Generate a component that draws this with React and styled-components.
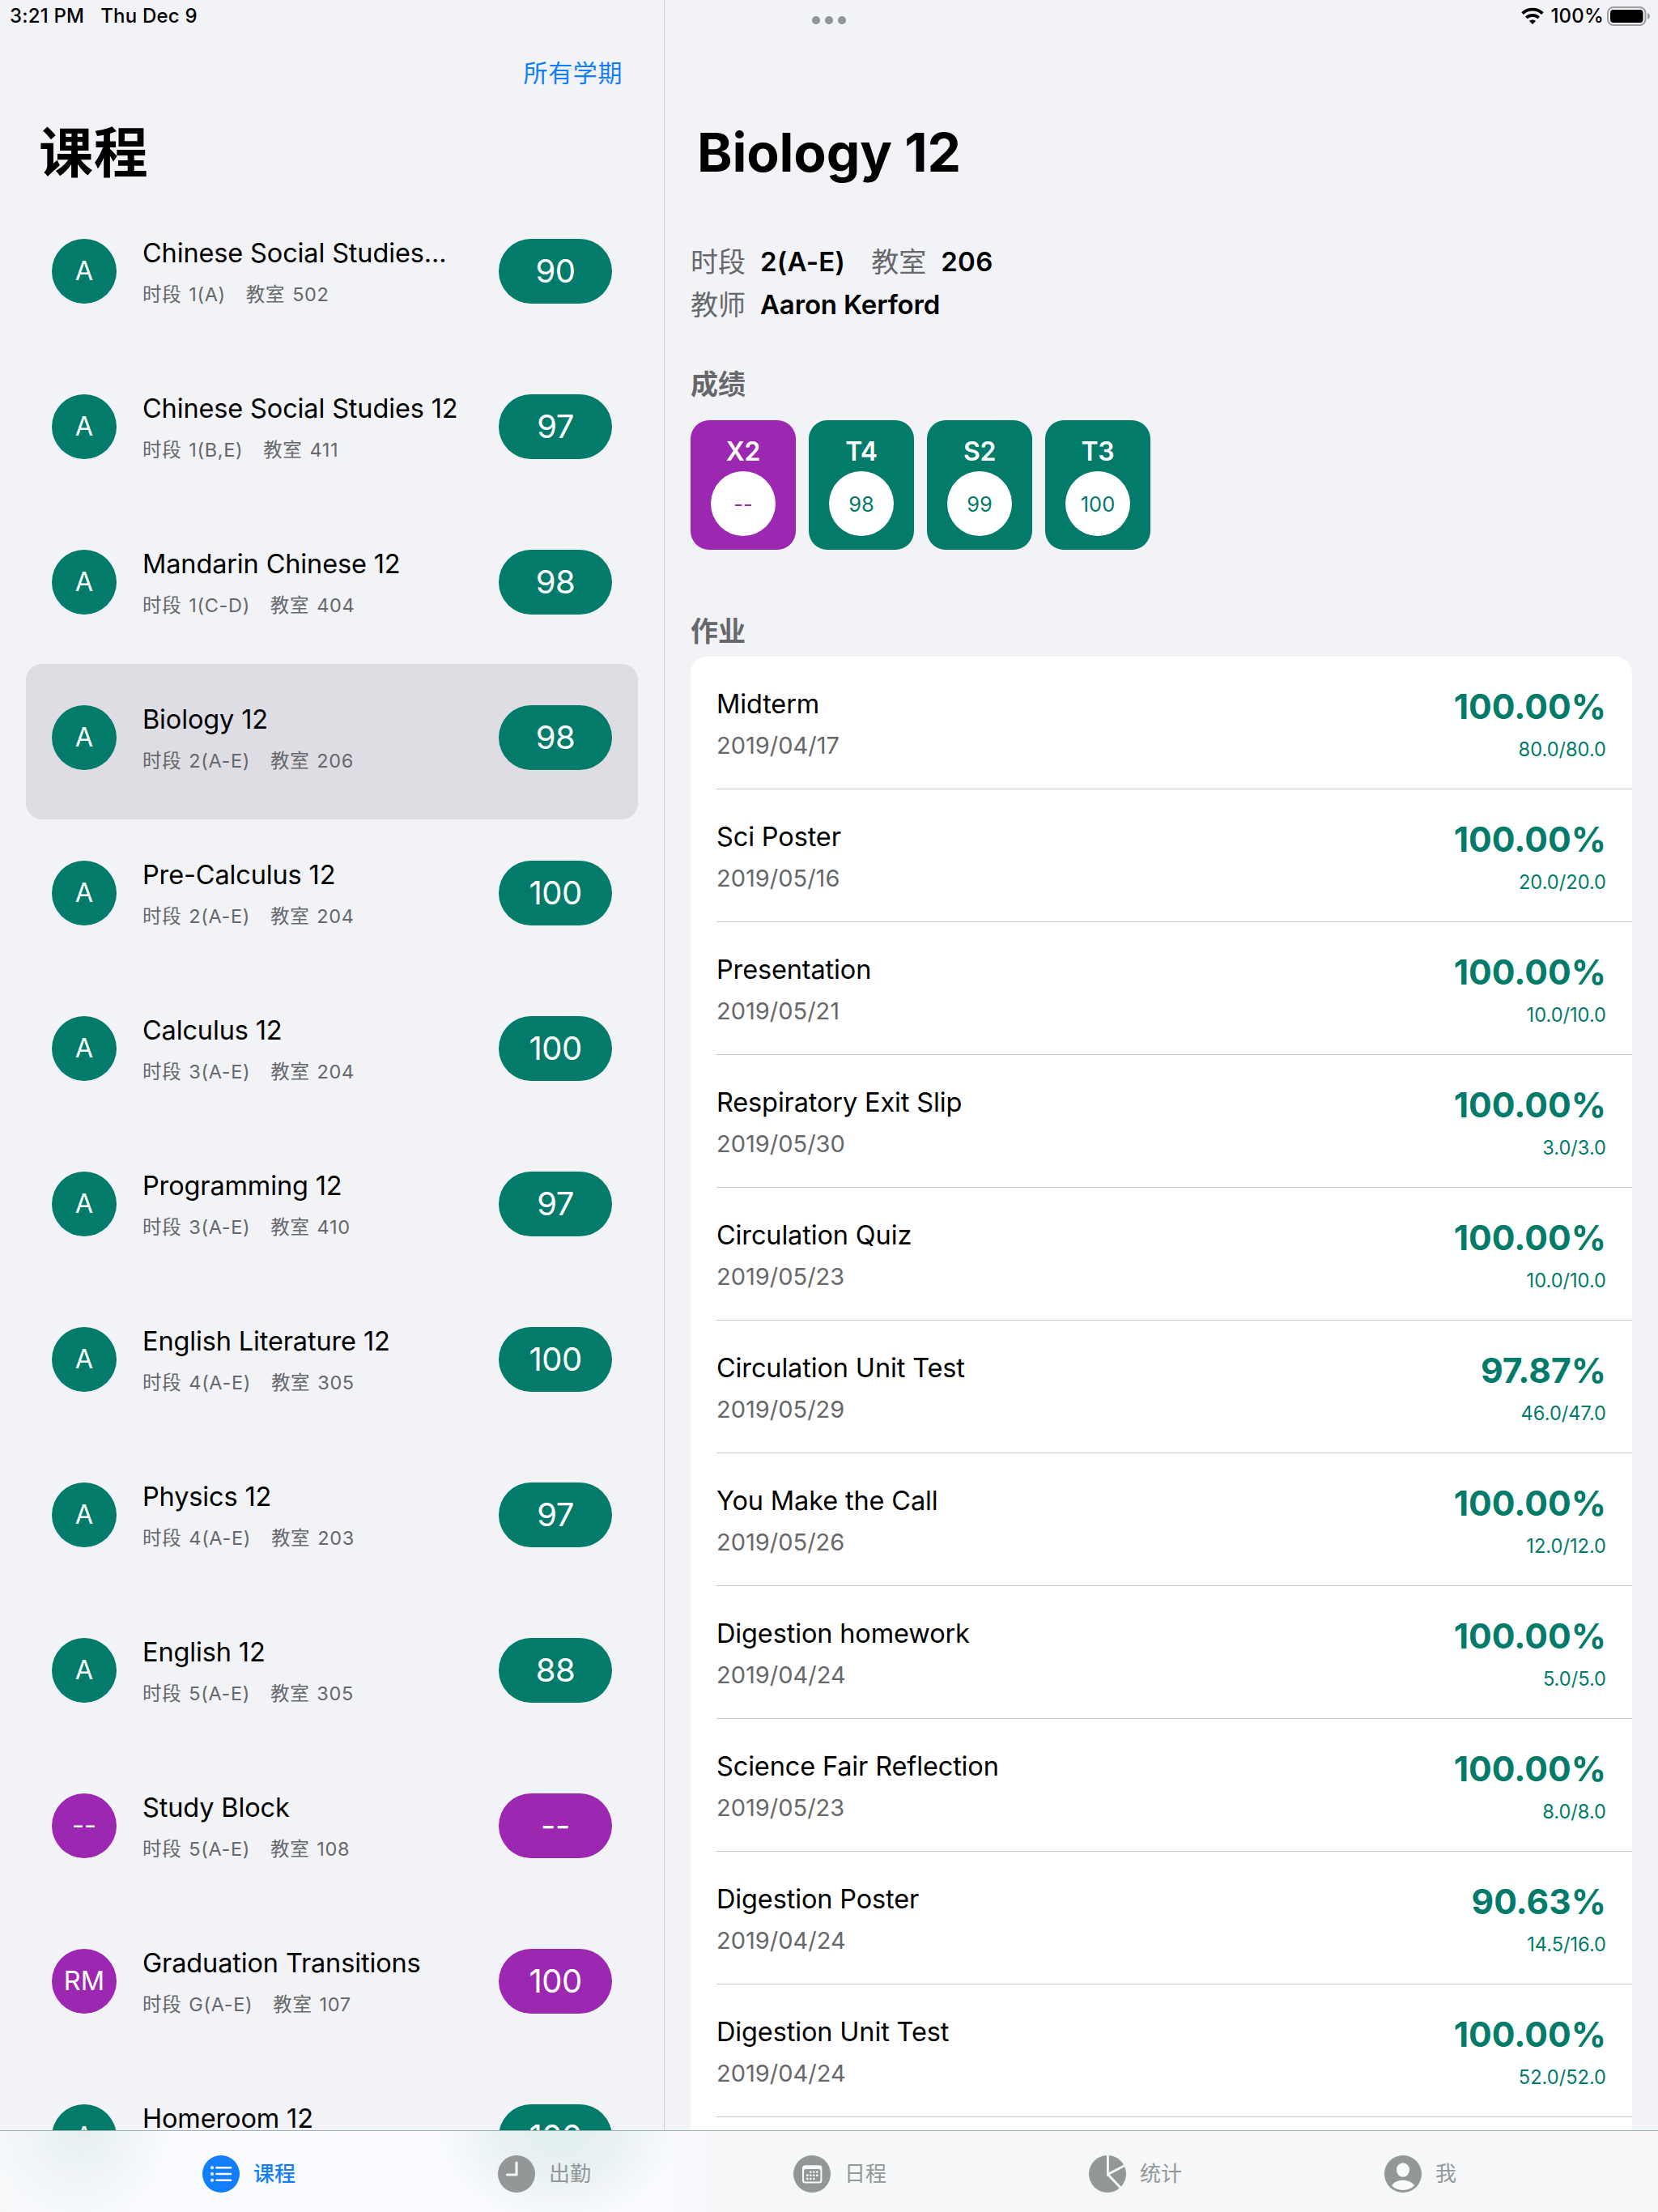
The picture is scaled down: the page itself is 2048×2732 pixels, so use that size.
import React from 'react';
import styled, { createGlobalStyle } from 'styled-components';

const TEAL = '#027b6a';
const PURPLE = '#9c27b0';
const BLUE = '#127efb';
const GRAY = '#929798';
const BG = '#f1f3f7';
const SECONDARY = '#66686b';

const GlobalStyle = createGlobalStyle`
  *, *::before, *::after { box-sizing: border-box; }
  html, body { margin: 0; padding: 0; background: ${BG}; }
  body {
    font-family: Inter, "Noto Sans CJK SC", sans-serif;
    color: #000;
  }
`;

const Screen = styled.div`
  display: flex;
  flex-direction: column;
  width: 2048px;
  height: 2732px;
  overflow: hidden;
  background: ${BG};
`;

const Split = styled.div`
  display: flex;
  height: 2631px;
  overflow: hidden;
`;

const Sidebar = styled.aside`
  flex: none;
  width: 821px;
  height: 100%;
  overflow: hidden;
  border-right: 1px solid #cfd0d4;
`;

const Detail = styled.main`
  flex: 1;
  height: 100%;
  overflow: hidden;
  padding: 0 32px;
`;

const StatusLeft = styled.div`
  display: flex;
  gap: 20px;
  padding: 6px 0 0 12px;
  height: 70px;
  font-size: 24px;
  font-weight: 500;
  line-height: 28px;
  letter-spacing: 0.2px;
  white-space: nowrap;
`;

const StatusRight = styled.div`
  display: flex;
  justify-content: space-between;
  margin: 0 -32px;
  padding: 0 9px 0 182px;
  height: 148px;
`;

const Dots = styled.div`
  display: flex;
  gap: 6px;
  padding-top: 20px;
`;

const Dot = styled.span`
  width: 10px;
  height: 10px;
  border-radius: 50%;
  background: #8f9495;
`;

const Indicators = styled.div`
  display: flex;
  align-items: flex-start;
`;

const WifiIcon = styled.svg`
  display: block;
  width: 28px;
  height: 21px;
  margin: 9px 8px 0 0;
`;

const BatteryPercent = styled.span`
  font-size: 24px;
  font-weight: 500;
  line-height: 28px;
  padding-top: 6px;
  letter-spacing: 0.2px;
  margin-right: 4px;
`;

const BatteryIcon = styled.svg`
  display: block;
  width: 54px;
  height: 24px;
  margin-top: 8px;
`;

const TermLink = styled.a`
  display: block;
  padding-right: 51px;
  text-align: right;
  font-size: 30px;
  line-height: 40px;
  letter-spacing: 0.6px;
  color: ${BLUE};
`;

const SidebarTitle = styled.h1`
  margin: 39px 0 15px 48px;
  height: 80px;
  font-size: 67px;
  font-weight: 700;
  line-height: 80px;
  letter-spacing: 0.8px;
`;

const CourseRow = styled.div`
  display: flex;
  align-items: center;
  height: 192px;
  margin: 0 32px;
  padding: 0 32px 10px;
  border-radius: 20px;
  background: ${(p) => (p.$selected ? '#dedde3' : 'transparent')};
`;

const Avatar = styled.div`
  display: flex;
  align-items: center;
  justify-content: center;
  flex: none;
  width: 80px;
  height: 80px;
  border-radius: 50%;
  background: ${(p) => p.$color};
  color: #fff;
  font-size: 32.5px;
  line-height: 40px;
`;

const CourseText = styled.div`
  flex: 1;
  min-width: 0;
  padding: 2px 0 0 32px;
  white-space: nowrap;
`;

const CourseName = styled.div`
  font-size: 32.5px;
  line-height: 40px;
  letter-spacing: -0.14px;
`;

const CourseInfo = styled.div`
  display: flex;
  margin-top: 15px;
  font-size: 23.5px;
  line-height: 32px;
  letter-spacing: 0.65px;
  color: ${SECONDARY};
`;

const InfoLabel = styled.span`
  margin-right: 9px;
`;

const InfoValue = styled.span`
  margin-right: 25px;
`;

const ScorePill = styled(Avatar)`
  width: 140px;
  border-radius: 40px;
  font-size: 40px;
  letter-spacing: -0.5px;
`;

const DetailTitle = styled.h1`
  margin: 0 0 69px 8px;
  height: 80px;
  font-size: 66px;
  font-weight: 700;
  line-height: 80px;
  letter-spacing: -0.15px;
`;

const MetaLine = styled.div`
  display: flex;
  height: 53px;
  font-size: 33px;
  line-height: 53px;
  white-space: nowrap;
`;

const MetaLabel = styled.span`
  margin-right: 18px;
  font-size: 34px;
  color: ${SECONDARY};
`;

const MetaValue = styled.span`
  margin-right: 32px;
  font-weight: 600;
  letter-spacing: ${(p) => p.$spacing || 0}px;
`;

const SectionTitle = styled.h2`
  margin: ${(p) => p.$top}px 0 0;
  font-size: 34px;
  font-weight: 600;
  line-height: 44px;
  color: ${SECONDARY};
`;

const Grades = styled.div`
  display: flex;
  gap: 16px;
  margin-top: 22px;
`;

const GradeCard = styled.div`
  display: flex;
  flex-direction: column;
  align-items: center;
  gap: 6px;
  width: 130px;
  height: 160px;
  padding-top: 21px;
  border-radius: 23px;
  background: ${(p) => p.$color};
`;

const GradeTerm = styled.div`
  color: #fff;
  font-size: 32px;
  font-weight: 600;
  line-height: 36px;
  letter-spacing: -0.3px;
`;

const GradeScore = styled.div`
  display: flex;
  align-items: center;
  justify-content: center;
  width: 80px;
  height: 80px;
  border-radius: 50%;
  background: #fff;
  color: ${(p) => p.$color};
  font-size: 25.5px;
`;

const Assignments = styled.div`
  margin-top: 9px;
  height: 2000px;
  padding-left: 32px;
  border-radius: 20px;
  background: #fff;
`;

const AssignmentRow = styled.div`
  display: flex;
  align-items: center;
  justify-content: space-between;
  height: 164px;
  padding: 4px 32px 0 0;
  border-bottom: 1px solid #c5c6ca;
  white-space: nowrap;
`;

const AssignmentName = styled.div`
  font-size: 32.5px;
  line-height: 40px;
  letter-spacing: -0.14px;
`;

const AssignmentDate = styled.div`
  margin-top: 13px;
  font-size: 29px;
  line-height: 36px;
  color: ${SECONDARY};
`;

const AssignmentResult = styled.div`
  text-align: right;
  color: ${TEAL};
`;

const Percent = styled.div`
  font-size: 42.6px;
  font-weight: 700;
  line-height: 50px;
`;

const Points = styled.div`
  margin-top: 13px;
  font-size: 23.6px;
  line-height: 30px;
`;

const TabBar = styled.nav`
  display: flex;
  flex: none;
  height: 101px;
  padding: 0 0 0 250px;
  border-top: 1px solid #9fb0b2;
  background:
    radial-gradient(ellipse 110px 110px at 104px 0, rgba(200, 225, 220, 0.42), rgba(205, 228, 223, 0.22) 50%, rgba(205, 228, 223, 0)),
    radial-gradient(ellipse 150px 115px at 690px 0, rgba(200, 225, 220, 0.45), rgba(200, 225, 220, 0.38) 45%, rgba(205, 228, 223, 0)),
    linear-gradient(90deg, #f6f8fa 0, #fafbfe 200px, #fafbfe 820px, #f5f7f9 890px, #f5f7f9 100%);
`;

const Tab = styled.div`
  display: flex;
  flex: none;
  align-items: center;
  gap: 17px;
  width: 365px;
  padding-top: 6px;
  font-size: 26px;
  font-weight: ${(p) => (p.$active ? 500 : 400)};
  line-height: 40px;
  color: ${(p) => (p.$active ? BLUE : GRAY)};

  &:last-child { width: auto; }
`;

const TabIcon = styled.svg`
  display: block;
  flex: none;
  width: 46px;
  height: 46px;
`;

const courses = [
  ['A', 'Chinese Social Studies...', '1(A)', '502', '90', TEAL],
  ['A', 'Chinese Social Studies 12', '1(B,E)', '411', '97', TEAL],
  ['A', 'Mandarin Chinese 12', '1(C-D)', '404', '98', TEAL],
  ['A', 'Biology 12', '2(A-E)', '206', '98', TEAL],
  ['A', 'Pre-Calculus 12', '2(A-E)', '204', '100', TEAL],
  ['A', 'Calculus 12', '3(A-E)', '204', '100', TEAL],
  ['A', 'Programming 12', '3(A-E)', '410', '97', TEAL],
  ['A', 'English Literature 12', '4(A-E)', '305', '100', TEAL],
  ['A', 'Physics 12', '4(A-E)', '203', '97', TEAL],
  ['A', 'English 12', '5(A-E)', '305', '88', TEAL],
  ['--', 'Study Block', '5(A-E)', '108', '--', PURPLE],
  ['RM', 'Graduation Transitions', 'G(A-E)', '107', '100', PURPLE],
  ['A', 'Homeroom 12', null, null, '100', TEAL],
];

const grades = [
  ['X2', '--', PURPLE],
  ['T4', '98', TEAL],
  ['S2', '99', TEAL],
  ['T3', '100', TEAL],
];

const assignments = [
  ['Midterm', '2019/04/17', '100.00%', '80.0/80.0'],
  ['Sci Poster', '2019/05/16', '100.00%', '20.0/20.0'],
  ['Presentation', '2019/05/21', '100.00%', '10.0/10.0'],
  ['Respiratory Exit Slip', '2019/05/30', '100.00%', '3.0/3.0'],
  ['Circulation Quiz', '2019/05/23', '100.00%', '10.0/10.0'],
  ['Circulation Unit Test', '2019/05/29', '97.87%', '46.0/47.0'],
  ['You Make the Call', '2019/05/26', '100.00%', '12.0/12.0'],
  ['Digestion homework', '2019/04/24', '100.00%', '5.0/5.0'],
  ['Science Fair Reflection', '2019/05/23', '100.00%', '8.0/8.0'],
  ['Digestion Poster', '2019/04/24', '90.63%', '14.5/16.0'],
  ['Digestion Unit Test', '2019/04/24', '100.00%', '52.0/52.0'],
];

function Wifi() {
  return (
    <WifiIcon viewBox="0 0 28 21" fill="none" stroke="#000" strokeWidth="3.8">
      <path d="M1.6 7.6C8.6 1 19.4 1 26.4 7.6" />
      <path d="M6.3 12.8c4.4-4 11-4 15.4 0" />
      <path d="M14 21l-4-4c2.4-2 5.6-2 8 0z" fill="#000" stroke="none" />
    </WifiIcon>
  );
}

function Battery() {
  return (
    <BatteryIcon viewBox="0 0 54 24">
      <rect x="1" y="1" width="46.5" height="22" rx="7" fill="none" stroke="#9b9ea0" strokeWidth="2" />
      <rect x="4" y="4" width="40.5" height="16" rx="4" fill="#000" />
      <path d="M50 8c4 1.4 4 6.600 0 8z" fill="#9b9ea0" />
    </BatteryIcon>
  );
}

function ListGlyph() {
  return (
    <TabIcon viewBox="0 0 46 46">
      <circle cx="23" cy="23" r="23" fill={BLUE} />
      {[15.2, 23, 30.8].map((y) => (
        <g key={y}>
          <circle cx="12" cy={y} r="2" fill="#fff" />
          <path d={`M17.500 ${y}H35`} stroke="#fff" strokeWidth="2.500" strokeLinecap="round" />
        </g>
      ))}
    </TabIcon>
  );
}

function ClockGlyph() {
  return (
    <TabIcon viewBox="0 0 46 46">
      <circle cx="23" cy="23" r="23" fill={GRAY} />
      <path d="M23 9V24H11.500" fill="none" stroke="#f1f6f6" strokeWidth="3.2" strokeLinecap="round" strokeLinejoin="round" />
    </TabIcon>
  );
}

function CalendarGlyph() {
  const cells = [
    [21.300, 20.6], [25.300, 20.6], [29.300, 20.6],
    [17.300, 24.8], [21.300, 24.8], [25.300, 24.8], [29.300, 24.8],
    [17.300, 29], [21.300, 29], [25.300, 29],
  ];
  return (
    <TabIcon viewBox="0 0 46 46">
      <circle cx="23" cy="23" r="23" fill={GRAY} />
      <rect x="11" y="12.300" width="24.400" height="22.200" rx="3.500" fill="#f8fafb" />
      <rect x="13" y="17" width="20.400" height="15.600" rx="2" fill={GRAY} />
      {cells.map(([x, y]) => (
        <rect key={`${x}-${y}`} x={x - 1.2} y={y - 1.2} width="2.400" height="2.400" rx="0.600" fill="#f8fafb" />
      ))}
    </TabIcon>
  );
}

function PieGlyph() {
  return (
    <TabIcon viewBox="0 0 46 46">
      <circle cx="23" cy="23" r="23" fill={GRAY} />
      <path d="M23.400 -1V23.600L47 11.200M23.400 23.600L41 42" fill="none" stroke="#f5f7f9" strokeWidth="2.900" />
    </TabIcon>
  );
}

function PersonGlyph() {
  return (
    <TabIcon viewBox="0 0 46 46">
      <circle cx="23" cy="23" r="23" fill={GRAY} />
      <ellipse cx="23" cy="18" rx="8" ry="8.800" fill="#f8fafb" />
      <path d="M9 37.300C12 33 17 30.700 23 30.700S34 33 37.200 37.300C33.500 41 29 43 23 43S12.500 41 9 37.300Z" fill="#f8fafb" />
    </TabIcon>
  );
}

const tabs = [
  ['课程', ListGlyph, true],
  ['出勤', ClockGlyph, false],
  ['日程', CalendarGlyph, false],
  ['统计', PieGlyph, false],
  ['我', PersonGlyph, false],
];

export default function App() {
  return (
    <Screen>
      <GlobalStyle />
      <Split>
        <Sidebar>
          <StatusLeft>
            <span>3:21 PM</span>
            <span>Thu Dec 9</span>
          </StatusLeft>
          <TermLink>所有学期</TermLink>
          <SidebarTitle>课程</SidebarTitle>
          {courses.map(([mark, name, period, room, score, color]) => (
            <CourseRow key={name} $selected={name === 'Biology 12'}>
              <Avatar $color={color}>{mark}</Avatar>
              <CourseText>
                <CourseName>{name}</CourseName>
                <CourseInfo>
                  {period ? (
                    <>
                      <InfoLabel>时段</InfoLabel>
                      <InfoValue>{period}</InfoValue>
                      <InfoLabel>教室</InfoLabel>
                      <InfoValue>{room}</InfoValue>
                    </>
                  ) : (
                    <>&nbsp;</>
                  )}
                </CourseInfo>
              </CourseText>
              <ScorePill $color={color}>{score}</ScorePill>
            </CourseRow>
          ))}
        </Sidebar>
        <Detail>
          <StatusRight>
            <Dots>
              <Dot />
              <Dot />
              <Dot />
            </Dots>
            <Indicators>
              <Wifi />
              <BatteryPercent>100%</BatteryPercent>
              <Battery />
            </Indicators>
          </StatusRight>
          <DetailTitle>Biology 12</DetailTitle>
          <MetaLine>
            <MetaLabel>时段</MetaLabel>
            <MetaValue $spacing={0.3}>2(A-E)</MetaValue>
            <MetaLabel>教室</MetaLabel>
            <MetaValue $spacing={0.3}>206</MetaValue>
          </MetaLine>
          <MetaLine>
            <MetaLabel>教师</MetaLabel>
            <MetaValue $spacing={-0.15}>Aaron Kerford</MetaValue>
          </MetaLine>
          <SectionTitle $top={50}>成绩</SectionTitle>
          <Grades>
            {grades.map(([term, score, color]) => (
              <GradeCard key={term} $color={color}>
                <GradeTerm>{term}</GradeTerm>
                <GradeScore $color={color}>{score}</GradeScore>
              </GradeCard>
            ))}
          </Grades>
          <SectionTitle $top={79}>作业</SectionTitle>
          <Assignments>
            {assignments.map(([name, date, percent, points]) => (
              <AssignmentRow key={name}>
                <div>
                  <AssignmentName>{name}</AssignmentName>
                  <AssignmentDate>{date}</AssignmentDate>
                </div>
                <AssignmentResult>
                  <Percent>{percent}</Percent>
                  <Points>{points}</Points>
                </AssignmentResult>
              </AssignmentRow>
            ))}
          </Assignments>
        </Detail>
      </Split>
      <TabBar>
        {tabs.map(([label, Glyph, active]) => (
          <Tab key={label} $active={active}>
            <Glyph />
            <span>{label}</span>
          </Tab>
        ))}
      </TabBar>
    </Screen>
  );
}
